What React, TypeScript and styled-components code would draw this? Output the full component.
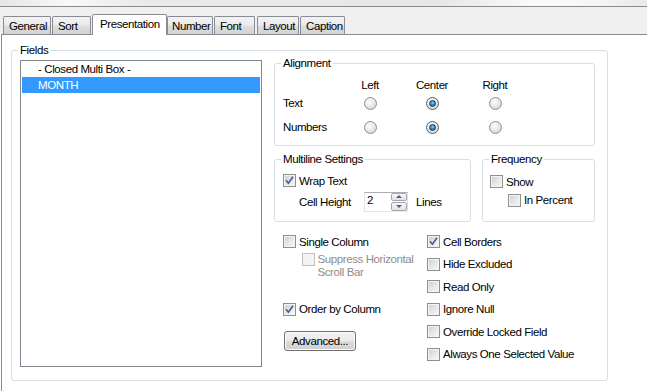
import React from 'react';
import styled, { createGlobalStyle } from 'styled-components';

const GlobalStyle = createGlobalStyle`
  html, body {
    margin: 0;
    padding: 0;
    background: #fff;
  }
  body {
    font-family: "Liberation Sans", Arial, sans-serif;
    font-size: 11.5px;
    letter-spacing: -0.4px;
    color: #000;
  }
`;

const Window = styled.div`
  width: 647px;
  height: 391px;
  overflow: hidden;
  display: flex;
  flex-direction: column;
  background: #fff;
`;

const TopShade = styled.div`
  height: 6px;
  border-bottom: 1px solid #8c8c8c;
  background: linear-gradient(
    90deg,
    #e6e6e6 0px,
    #f8f8f8 70px,
    #eaeaea 140px,
    #e7e7e7 440px,
    #fbfbfb 540px,
    #f5f5f5 600px,
    #e9e9e9 647px
  );
`;

const TabStrip = styled.div`
  height: 27px;
  display: flex;
  align-items: flex-end;
  padding-left: 3px;
  background: #f0f0f0;
`;

const Tab = styled.div<{ $w: number; $gap: number; $pad: number; $active?: boolean }>`
  position: relative;
  z-index: ${(p) => (p.$active ? 1 : 0)};
  box-sizing: border-box;
  width: ${(p) => p.$w}px;
  height: ${(p) => (p.$active ? 21 : 18)}px;
  margin-right: ${(p) => p.$gap}px;
  margin-bottom: ${(p) => (p.$active ? -1 : 0)}px;
  padding: 1.5px 0 0 ${(p) => p.$pad}px;
  border: 1px solid #898c95;
  border-bottom: none;
  border-radius: 2px 2px 0 0;
  background: ${(p) =>
    p.$active ? '#fff' : 'linear-gradient(#f3f3f3 0%, #ebebeb 45%, #dedede 55%, #d2d2d2 100%)'};
  line-height: 14px;
  white-space: nowrap;
`;

const Panel = styled.div`
  flex: 1;
  margin-left: 1px;
  padding: 8px 0 0 9px;
  border-top: 1px solid #898c95;
  border-left: 1px solid #898c95;
  background: #fff;
`;

const Group = styled.fieldset<{ $w?: number }>`
  margin: 0;
  padding: 0;
  min-width: 0;
  box-sizing: border-box;
  ${(p) => (p.$w ? `width: ${p.$w}px;` : '')}
  border: 1px solid #d5dfe5;
  border-radius: 3px;
`;

const Legend = styled.legend`
  margin-left: 6px;
  padding: 0 2px;
  line-height: 14px;
`;

const FieldsBody = styled.div`
  display: grid;
  grid-template-columns: 242px 321px;
  column-gap: 12px;
  align-items: start;
  padding: 0 12px 13px 8px;
`;

const ListBox = styled.div`
  box-sizing: border-box;
  height: 307px;
  margin-top: 3px;
  padding: 0 1px;
  border: 1px solid #828790;
  background: #fff;
`;

const ListItem = styled.div<{ $selected?: boolean }>`
  height: 16px;
  line-height: 16px;
  padding-left: 16px;
  background: ${(p) => (p.$selected ? '#3399ff' : 'transparent')};
  color: ${(p) => (p.$selected ? '#fff' : '#000')};
  white-space: nowrap;
`;

const RightCol = styled.div`
  display: flex;
  flex-direction: column;
  margin-top: -1px;
`;

const AlignGrid = styled.div`
  display: grid;
  grid-template-columns: 56px 62px 62px 64px;
  grid-template-rows: 14px 22px 26px;
  align-items: center;
  padding: 8px 0 5px 8px;
  line-height: 14px;
`;

const ColHead = styled.span`
  justify-self: center;
`;

const RadioCell = styled.span`
  justify-self: center;
  display: flex;
`;

const Radio = styled.span<{ $on?: boolean }>`
  box-sizing: border-box;
  width: 13px;
  height: 13px;
  border-radius: 50%;
  border: 1px solid ${(p) => (p.$on ? '#55606b' : '#8e8f8f')};
  background: radial-gradient(circle at 40% 35%, #fdfdfd 0%, #ececec 40%, #c9cbce 100%);
  display: flex;
  align-items: center;
  justify-content: center;
`;

const RadioDot = styled.span`
  width: 7px;
  height: 7px;
  box-sizing: border-box;
  border-radius: 50%;
  border: 1px solid #17476f;
  background: radial-gradient(circle at 50% 40%, #9ad8fb 0%, #2f8bd0 45%, #0e4c80 100%);
`;

const MidRow = styled.div`
  display: flex;
  gap: 11px;
  margin-top: 6px;
`;

const MultiBody = styled.div`
  padding: 6.5px 8px 9px 8px;
`;

const FreqBody = styled.div`
  padding: 7.5px 7px 0 7px;
`;

const CheckRow = styled.label<{ $indent?: number; $top?: number }>`
  display: flex;
  align-items: center;
  gap: 3px;
  height: 16px;
  line-height: 16px;
  margin-left: ${(p) => p.$indent ?? 0}px;
  margin-top: ${(p) => p.$top ?? 0}px;
  white-space: nowrap;
`;

const Box = styled.span<{ $disabled?: boolean }>`
  flex: none;
  box-sizing: border-box;
  width: 13px;
  height: 13px;
  border: 1px solid ${(p) => (p.$disabled ? '#c0c0c0' : '#8e8f8f')};
  background: ${(p) =>
    p.$disabled ? '#f4f4f4' : 'linear-gradient(135deg, #c9ccd1 0%, #e3e4e6 45%, #f9f9f9 100%)'};
  box-shadow: inset 0 0 0 1px #f4f4f4;
  display: flex;
  align-items: center;
  justify-content: center;
`;

const SpinRow = styled.div`
  display: flex;
  align-items: center;
  height: 20px;
  margin-top: 3px;
  padding-left: 16px;
  line-height: 14px;
`;

const SpinLabel = styled.span`
  width: 65px;
`;

const Spin = styled.div`
  box-sizing: border-box;
  width: 44px;
  height: 20px;
  display: flex;
  border: 1px solid;
  border-color: #abadb3 #dbdfe6 #e3e9ef #e2e3ea;
  background: #fff;
`;

const SpinValue = styled.span`
  flex: 1;
  padding: 0 0 0 2px;
  line-height: 14px;
`;

const SpinButtons = styled.div`
  width: 16px;
  display: flex;
  flex-direction: column;
  gap: 1px;
`;

const SpinButton = styled.span`
  flex: 1;
  box-sizing: border-box;
  border: 1px solid #a4a7ab;
  border-radius: 2px;
  background: linear-gradient(#f7f7f7, #e2e2e2);
  display: flex;
  align-items: center;
  justify-content: center;
`;

const Arrow = styled.span<{ $down?: boolean }>`
  width: 0;
  height: 0;
  border-left: 3px solid transparent;
  border-right: 3px solid transparent;
  ${(p) => (p.$down ? 'border-top: 3px solid #4d6185;' : 'border-bottom: 3px solid #4d6185;')}
`;

const SpinUnit = styled.span`
  margin-left: 8px;
`;

const Bottom = styled.div`
  display: grid;
  grid-template-columns: 144px 1fr;
  margin-top: 12px;
  padding-left: 9px;
`;

const LeftChecks = styled.div`
  display: flex;
  flex-direction: column;
  align-items: flex-start;
`;

const RightChecks = styled.div`
  display: flex;
  flex-direction: column;
  gap: 6.6px;
`;

const SubOption = styled.div`
  display: flex;
  align-items: flex-start;
  gap: 3px;
  margin: 3.5px 0 0 18.5px;
  color: #8d8d8d;
  line-height: 13px;
`;

const SubText = styled.span`
  max-width: 100px;
`;

const Button = styled.button`
  box-sizing: border-box;
  width: 72px;
  height: 20px;
  margin: 14px 0 0 1px;
  padding: 0;
  font: inherit;
  letter-spacing: inherit;
  color: #000;
  line-height: 14px;
  border: 1px solid #707070;
  border-radius: 3px;
  background: linear-gradient(#f2f2f2 0%, #ebebeb 49%, #dddddd 51%, #cfcfcf 100%);
  box-shadow: inset 0 0 0 1px #fcfcfc;
`;

const CheckMark = () => (
  <svg width="11" height="11" viewBox="0 0 11 11">
    <path d="M2 5.3 L4.4 8.2 L9 1.8" fill="none" stroke="#4a5f92" strokeWidth="1.7" />
  </svg>
);

const Check = ({ label, checked, indent, top }: { label: string; checked?: boolean; indent?: number; top?: number }) => (
  <CheckRow $indent={indent} $top={top}>
    <Box>{checked && <CheckMark />}</Box>
    <span>{label}</span>
  </CheckRow>
);

const tabs = [
  { name: 'General', w: 48, gap: 1, pad: 5 },
  { name: 'Sort', w: 39, gap: 1, pad: 5 },
  { name: 'Presentation', w: 75, gap: 0, pad: 7, active: true },
  { name: 'Number', w: 46, gap: 1, pad: 4 },
  { name: 'Font', w: 41, gap: 2, pad: 5 },
  { name: 'Layout', w: 42, gap: 1, pad: 5 },
  { name: 'Caption', w: 45, gap: 0, pad: 5 },
];

const rightOptions = [
  { label: 'Cell Borders', checked: true },
  { label: 'Hide Excluded' },
  { label: 'Read Only' },
  { label: 'Ignore Null' },
  { label: 'Override Locked Field' },
  { label: 'Always One Selected Value' },
];

const App: React.FC = () => {
  return (
    <Window>
      <GlobalStyle />
      <TopShade />
      <TabStrip>
        {tabs.map((t) => (
          <Tab key={t.name} $w={t.w} $gap={t.gap} $pad={t.pad} $active={t.active}>
            {t.name}
          </Tab>
        ))}
      </TabStrip>
      <Panel>
        <Group $w={597}>
          <Legend>Fields</Legend>
          <FieldsBody>
            <ListBox>
              <ListItem>- Closed Multi Box -</ListItem>
              <ListItem $selected>MONTH</ListItem>
            </ListBox>

            <RightCol>
              <Group>
                <Legend>Alignment</Legend>
                <AlignGrid>
                  <span />
                  <ColHead>Left</ColHead>
                  <ColHead>Center</ColHead>
                  <ColHead>Right</ColHead>
                  <span>Text</span>
                  <RadioCell><Radio /></RadioCell>
                  <RadioCell><Radio $on><RadioDot /></Radio></RadioCell>
                  <RadioCell><Radio /></RadioCell>
                  <span>Numbers</span>
                  <RadioCell><Radio /></RadioCell>
                  <RadioCell><Radio $on><RadioDot /></Radio></RadioCell>
                  <RadioCell><Radio /></RadioCell>
                </AlignGrid>
              </Group>

              <MidRow>
                <Group $w={197}>
                  <Legend>Multiline Settings</Legend>
                  <MultiBody>
                    <Check label="Wrap Text" checked />
                    <SpinRow>
                      <SpinLabel>Cell Height</SpinLabel>
                      <Spin>
                        <SpinValue>2</SpinValue>
                        <SpinButtons>
                          <SpinButton><Arrow /></SpinButton>
                          <SpinButton><Arrow $down /></SpinButton>
                        </SpinButtons>
                      </Spin>
                      <SpinUnit>Lines</SpinUnit>
                    </SpinRow>
                  </MultiBody>
                </Group>
                <Group $w={113}>
                  <Legend>Frequency</Legend>
                  <FreqBody>
                    <Check label="Show" />
                    <Check label="In Percent" indent={18} top={2.5} />
                  </FreqBody>
                </Group>
              </MidRow>

              <Bottom>
                <LeftChecks>
                  <Check label="Single Column" />
                  <SubOption>
                    <Box $disabled />
                    <SubText>Suppress Horizontal Scroll Bar</SubText>
                  </SubOption>
                  <Check label="Order by Column" checked top={22} />
                  <Button>Advanced...</Button>
                </LeftChecks>
                <RightChecks>
                  {rightOptions.map((o) => (
                    <Check key={o.label} label={o.label} checked={o.checked} />
                  ))}
                </RightChecks>
              </Bottom>
            </RightCol>
          </FieldsBody>
        </Group>
      </Panel>
    </Window>
  );
};

export default App;
